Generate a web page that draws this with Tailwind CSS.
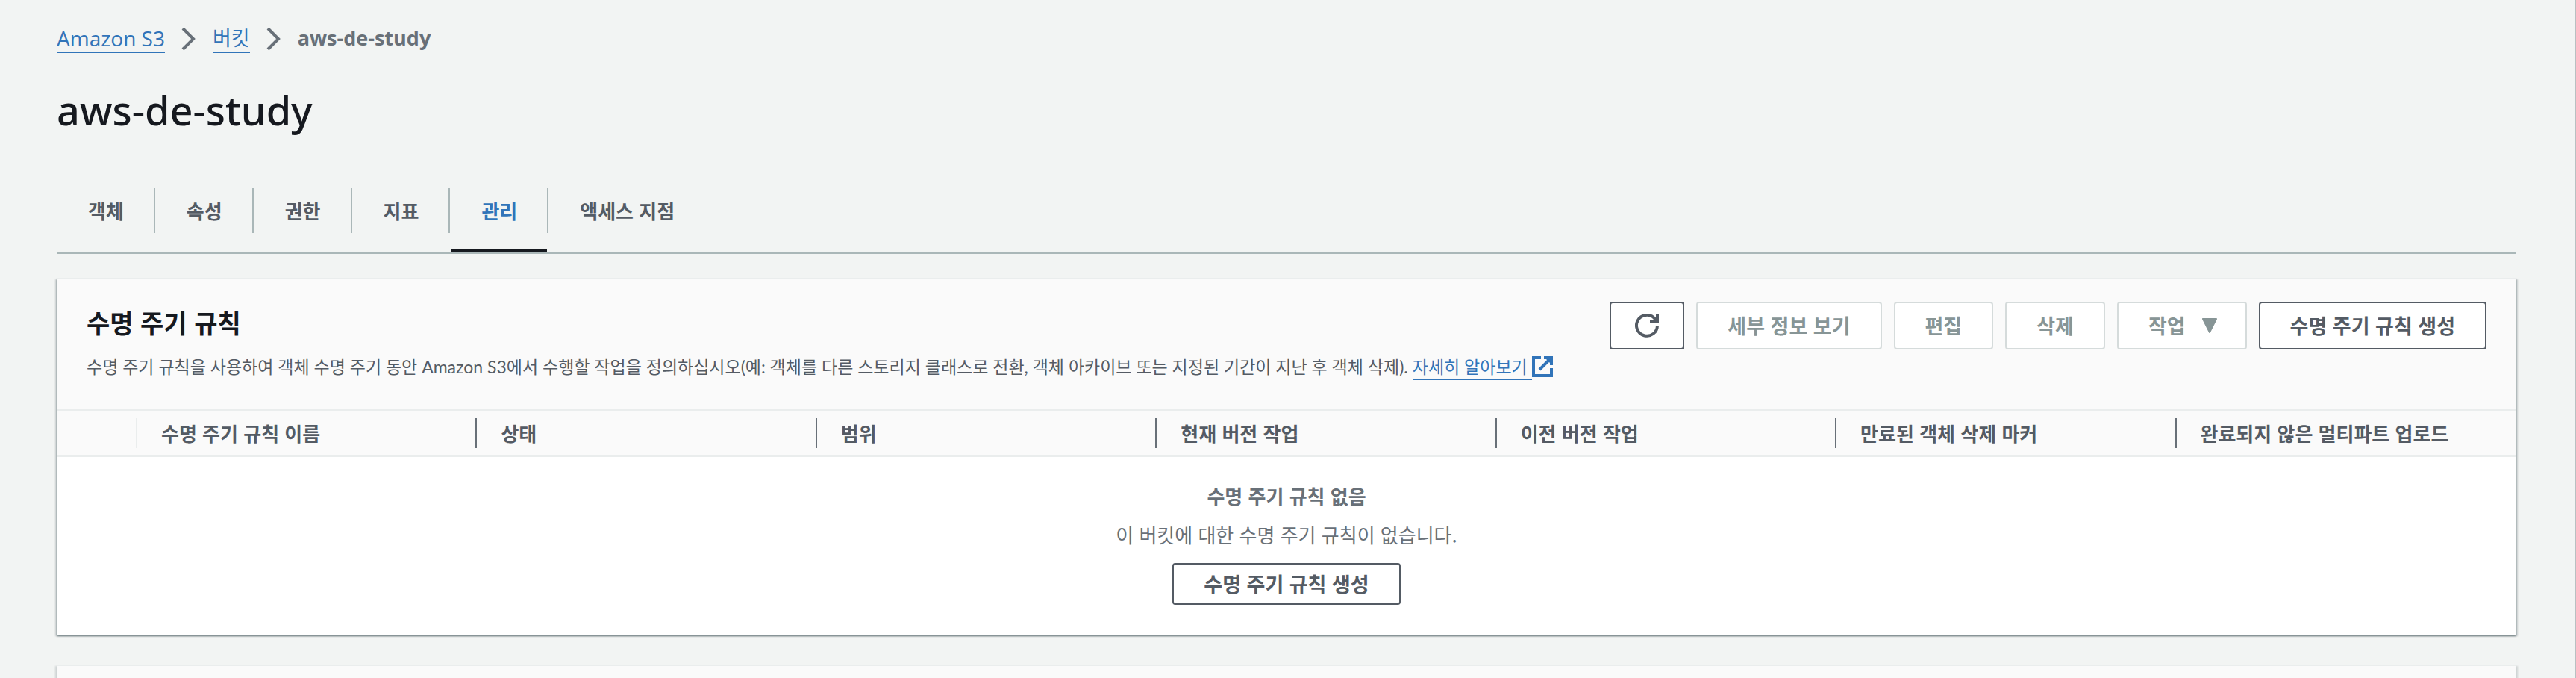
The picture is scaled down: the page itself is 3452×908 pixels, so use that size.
<!DOCTYPE html>
<html lang="ko">
  <head>
    <meta charset="UTF-8" />
    <meta name="viewport" content="width=device-width, initial-scale=1.0" />
    <title>aws-de-study - S3 버킷</title>
    <script src="https://cdn.jsdelivr.net/npm/@tailwindcss/browser@4"></script>
  </head>
  <body
    class="min-h-screen overflow-hidden bg-[#f2f4f3] font-['Noto_Sans_CJK_KR',sans-serif] text-[26px] leading-[44px] text-[#545b64]"
  >
    <main class="h-screen overflow-hidden border-r-2 border-[#b9c0c2] pt-[30px] pr-[78px] pl-[76px]">
      <nav aria-label="Breadcrumb" class="font-['Open_Sans','Noto_Sans_CJK_KR',sans-serif] text-[27px] leading-[42px]">
        <ol class="flex items-start">
          <li>
            <a href="#" class="block h-[41px] border-b-2 border-[#3174b9] text-[28px] text-[#3174b9]">Amazon S3</a>
          </li>
          <li class="px-[22px] pt-[6px]">
            <svg class="h-[32px] w-[20px]" viewBox="0 0 20 32" fill="none" stroke="#687078" stroke-width="4">
              <path d="M2 2 L16 16 L2 30" />
            </svg>
          </li>
          <li>
            <a href="#" class="block h-[41px] border-b-2 border-[#3174b9] text-[#3174b9]">버킷</a>
          </li>
          <li class="px-[22px] pt-[6px]">
            <svg class="h-[32px] w-[20px]" viewBox="0 0 20 32" fill="none" stroke="#687078" stroke-width="4">
              <path d="M2 2 L16 16 L2 30" />
            </svg>
          </li>
          <li class="font-bold text-[#687078]" aria-current="page">aws-de-study</li>
        </ol>
      </nav>

      <h1 class="mt-[39px] font-['Noto_Sans',sans-serif] text-[54px] leading-[72px] font-medium text-[#16191f]">aws-de-study</h1>

      <!-- Tabs -->
      <div role="tablist" class="mt-[69px] flex h-[88px] items-start border-b-2 border-[#aab7b8] font-bold">
        <div class="flex">
          <button role="tab" class="ml-[2px] h-[60px] px-10">객체</button>
          <span class="h-[60px] w-[2px] bg-[#aab7b8]"></span>
        </div>
        <div class="flex">
          <button role="tab" class="ml-[2px] h-[60px] px-10">속성</button>
          <span class="h-[60px] w-[2px] bg-[#aab7b8]"></span>
        </div>
        <div class="flex">
          <button role="tab" class="ml-[2px] h-[60px] px-10">권한</button>
          <span class="h-[60px] w-[2px] bg-[#aab7b8]"></span>
        </div>
        <div class="flex">
          <button role="tab" class="ml-[2px] h-[60px] px-10">지표</button>
          <span class="h-[60px] w-[2px] bg-[#aab7b8]"></span>
        </div>
        <div class="flex">
          <div class="ml-[2px] h-[86px] border-b-4 border-[#16191f]">
            <button role="tab" aria-selected="true" class="h-[60px] px-10 text-[#3174b9]">관리</button>
          </div>
          <span class="h-[60px] w-[2px] bg-[#aab7b8]"></span>
        </div>
        <div class="flex">
          <button role="tab" class="ml-[2px] h-[60px] px-10">액세스 지점</button>
        </div>
      </div>

      <!-- Lifecycle rules -->
      <section
        class="mt-8 border-t-2 border-[#eaeded] bg-white shadow-[0_2px_2px_0_rgba(0,28,36,0.45),2px_2px_2px_0_rgba(0,28,36,0.15),-2px_2px_2px_0_rgba(0,28,36,0.15)]"
      >
        <header class="flex h-[174px] items-start justify-between bg-[#fafafa] px-10 pt-[30px]">
          <div class="flex-1">
            <h2 class="pt-[6px] text-[34px] font-bold text-[#16191f]">수명 주기 규칙</h2>
            <p class="mt-[21px] flex font-['Lato','Noto_Sans_CJK_KR',sans-serif] text-[23px] leading-[32px]">
              <span>수명 주기 규칙을 사용하여 객체 수명 주기 동안 Amazon S3에서 수행할 작업을 정의하십시오(예: 객체를 다른 스토리지 클래스로 전환, 객체 아카이브 또는 지정된 기간이 지난 후 객체 삭제).</span>
              <a href="#" class="ml-[6px] flex items-start text-[#3174b9]">
                <span class="border-b-2 border-[#3174b9] pr-[6px]">자세히 알아보기</span>
                <svg class="mt-[2px] h-[28px] w-[28px]" viewBox="0 0 28 28" fill="none" stroke="currentColor" stroke-width="4">
                  <path d="M12 2 H2 V26 H26 V16 M16 2 H26 V12 M25 3 L10 18" />
                  <path d="M18 3 H25 V10 Z" fill="currentColor" stroke="none" />
                </svg>
              </a>
            </p>
          </div>
          <div class="flex shrink-0 gap-4 text-[27px] font-bold whitespace-nowrap">
            <button aria-label="새로 고침" class="flex h-16 w-[100px] items-center justify-center rounded-[4px] border-2 border-[#545b64] bg-white">
              <svg class="h-8 w-8" viewBox="0 0 32 32" fill="none" stroke="currentColor" stroke-width="4">
                <path d="M30 16 A14 14 0 1 1 26 6 L29 10 M30 0 V10 H20" />
              </svg>
            </button>
            <button disabled class="h-16 rounded-[4px] border-2 border-[#d5dbdb] bg-white px-10 text-[#879596]">세부 정보 보기</button>
            <button disabled class="h-16 rounded-[4px] border-2 border-[#d5dbdb] bg-white px-10 text-[#879596]">편집</button>
            <button disabled class="h-16 rounded-[4px] border-2 border-[#d5dbdb] bg-white px-10 text-[#879596]">삭제</button>
            <button disabled class="flex h-16 items-center gap-[22px] rounded-[4px] border-2 border-[#d5dbdb] bg-white pr-[38px] pl-10 text-[#879596]">
              작업
              <svg class="h-[20px] w-[20px]" viewBox="0 0 20 20" fill="currentColor" stroke="currentColor" stroke-width="2" stroke-linejoin="round">
                <path d="M1 1 H19 L10 19 Z" />
              </svg>
            </button>
            <button class="h-16 rounded-[4px] border-2 border-[#545b64] bg-white px-10">수명 주기 규칙 생성</button>
          </div>
        </header>

        <table class="w-full table-fixed border-collapse">
          <thead>
            <tr class="h-[62px] border-y-2 border-[#eaeded] bg-[#fafafa] text-left">
              <td class="w-[108px] p-0"><div class="h-10 border-r-2 border-[#eaeded]"></div></td>
              <th scope="col" class="p-0"><div class="h-10 border-r-2 border-[#687078] pl-8 leading-10">수명 주기 규칙 이름</div></th>
              <th scope="col" class="p-0"><div class="h-10 border-r-2 border-[#687078] pl-8 leading-10">상태</div></th>
              <th scope="col" class="p-0"><div class="h-10 border-r-2 border-[#687078] pl-8 leading-10">범위</div></th>
              <th scope="col" class="p-0"><div class="h-10 border-r-2 border-[#687078] pl-8 leading-10">현재 버전 작업</div></th>
              <th scope="col" class="p-0"><div class="h-10 border-r-2 border-[#687078] pl-8 leading-10">이전 버전 작업</div></th>
              <th scope="col" class="p-0"><div class="h-10 border-r-2 border-[#687078] pl-8 leading-10">만료된 객체 삭제 마커</div></th>
              <th scope="col" class="p-0"><div class="h-10 pl-8 leading-10">완료되지 않은 멀티파트 업로드</div></th>
            </tr>
          </thead>
          <tbody>
            <tr>
              <td colspan="8" class="px-0 pt-[30px] pb-10 text-center text-[#687078]">
                <p class="font-bold">수명 주기 규칙 없음</p>
                <p class="mt-2">이 버킷에 대한 수명 주기 규칙이 없습니다.</p>
                <button class="mx-auto mt-4 block h-14 rounded-[4px] border-2 border-[#545b64] bg-white px-10 text-[27px] font-bold text-[#545b64]">수명 주기 규칙 생성</button>
              </td>
            </tr>
          </tbody>
        </table>
      </section>

      <section
        class="mt-10 h-20 border-t-2 border-[#eaeded] bg-[#fafafa] shadow-[2px_2px_2px_0_rgba(0,28,36,0.15),-2px_2px_2px_0_rgba(0,28,36,0.15)]"
      ></section>
    </main>
  </body>
</html>
